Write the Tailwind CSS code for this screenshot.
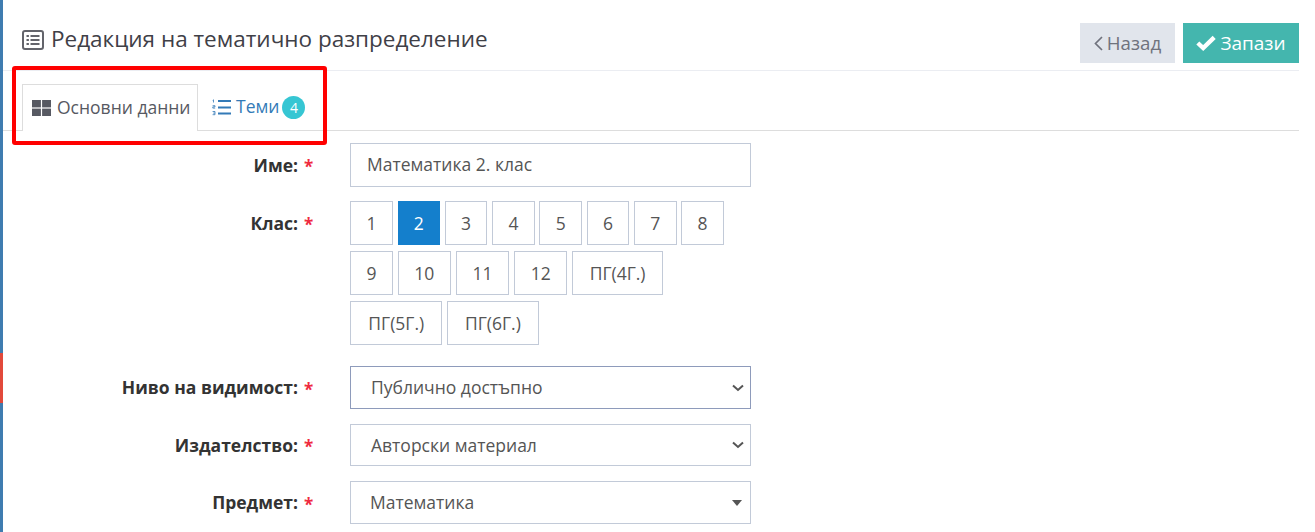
<!DOCTYPE html>
<html lang="bg">
<head>
<meta charset="utf-8">
<title>Редакция на тематично разпределение</title>
<script src="https://cdn.jsdelivr.net/npm/@tailwindcss/browser@4"></script>
</head>
<body class="bg-white overflow-hidden font-['Open_Sans',sans-serif] text-[#495057]">
<div class="relative flex h-[532px] w-[1315px] overflow-hidden">
    <!-- left strip -->
    <div class="flex flex-col w-[3px] h-full shrink-0 bg-[#3f7cb0]">
        <div class="h-[353px]"></div>
        <div class="h-[50px] bg-[#e2493b]"></div>
    </div>

    <div class="w-[1296px] shrink-0">
        <!-- header -->
        <div class="flex justify-between h-[71px] border-b border-[#ebedf2] pl-[19px]">
            <div class="flex items-center gap-[7px] h-[39px] mt-[19px] text-[22.5px] text-[#3f4047]">
                <svg class="w-[22px] h-[20px] mt-[2px]" viewBox="0 0 22 20" fill="none">
                    <rect x="1" y="1" width="20" height="18" rx="2" stroke="#63646b" stroke-width="2"/>
                    <g fill="#63646b">
                        <rect x="4.5" y="5" width="2.4" height="2"/>
                        <rect x="4.5" y="9" width="2.4" height="2"/>
                        <rect x="4.5" y="13" width="2.4" height="2"/>
                        <rect x="8.5" y="5" width="9" height="2"/>
                        <rect x="8.5" y="9" width="9" height="2"/>
                        <rect x="8.5" y="13" width="9" height="2"/>
                    </g>
                </svg>
                <h1 class="font-normal">Редакция на тематично разпределение</h1>
            </div>
            <div class="flex gap-2 mt-[23px] h-10">
                <button class="flex items-center justify-center gap-[4px] w-[95px] bg-[#e1e5ec] text-[18.7px] text-[#6f727d]">
                    <svg class="w-[9px] h-[15px]" viewBox="0 0 9 15" fill="none"><path d="M8 1 1.5 7.5 8 14" stroke="#6f727d" stroke-width="1.7"/></svg>
                    Назад
                </button>
                <button class="flex items-center justify-center gap-[4px] w-[116px] bg-[#44b6ae] text-[19px] text-white">
                    <svg class="w-[20px] h-[16px]" viewBox="0 0 20 16" fill="none"><path d="M1.8 8 7.2 13 18.2 2.4" stroke="#fff" stroke-width="4.4"/></svg>
                    Запази
                </button>
            </div>
        </div>

        <!-- tabs -->
        <div class="flex h-[60px] pt-[13px] pl-[19px] border-b border-[#ddd]">
            <div class="flex items-center gap-[6px] w-[176px] h-[47px] pl-[9px] bg-white border border-b-0 border-[#ddd] text-[17.5px] text-[#575962]">
                <svg class="w-[19px] h-[16px]" viewBox="0 0 19 16" fill="#575962">
                    <rect width="8.9" height="7.4"/><rect x="10.1" width="8.9" height="7.4"/>
                    <rect y="8.6" width="8.9" height="7.4"/><rect x="10.1" y="8.6" width="8.9" height="7.4"/>
                </svg>
                <span class="-mt-[2px]">Основни данни</span>
            </div>
            <div class="flex items-center pl-[14px] text-[17.5px] text-[#337ab7]">
                <svg class="w-[19px] h-[17px] mr-[5px]" viewBox="0 0 19 17" fill="none" stroke="#337ab7">
                    <path d="M6 2h13M6 8.5h13M6 14.5h13" stroke-width="2"/>
                    <path d="M1.5 3.5V.8L.7 1.4M.6 6.7h2.4v1.2H.8v1.2h2.4M.6 12.5h2.4v1.6H1.2M3 14.1v1.6H.6" stroke-width=".8"/>
                </svg>
                <span class="-mt-[2px]">Теми</span>
                <span class="flex items-center justify-center w-[23px] h-[23px] ml-[3px] rounded-full bg-[#36c6d3] text-[14px] text-white">4</span>
            </div>
        </div>

        <!-- form -->
        <div class="pt-[12px] text-[17.5px]">
            <div class="flex mb-[14px]">
                <label class="flex items-center justify-end w-[295px] h-[44px] font-bold text-[#333]">Име:</label>
                <span class="flex items-center w-[52px] h-[44px] pl-[6px] pt-[4px] text-[17px] text-[#ef2b3f] font-bold">*</span>
                <input class="w-[401px] h-[44px] px-4 pb-[2px] border border-[#c2cad8] text-[#555]" value="Математика 2. клас">
            </div>

            <div class="flex mb-[21px]">
                <label class="flex items-center justify-end w-[295px] h-[44px] font-bold text-[#333]">Клас:</label>
                <span class="flex items-center w-[52px] h-[44px] pl-[6px] pt-[4px] text-[17px] text-[#ef2b3f] font-bold">*</span>
                <div class="w-[401px] pl-[0.25px] flex flex-wrap gap-x-[4.7px] gap-y-[6px] text-[#555]">
                    <div class="flex items-center justify-center w-[42.6px] h-[44px] border border-[#c2cad8]">1</div>
                    <div class="flex items-center justify-center w-[42.6px] h-[44px] bg-[#147fcc] text-white">2</div>
                    <div class="flex items-center justify-center w-[42.6px] h-[44px] border border-[#c2cad8]">3</div>
                    <div class="flex items-center justify-center w-[42.6px] h-[44px] border border-[#c2cad8]">4</div>
                    <div class="flex items-center justify-center w-[42.6px] h-[44px] border border-[#c2cad8]">5</div>
                    <div class="flex items-center justify-center w-[42.6px] h-[44px] border border-[#c2cad8]">6</div>
                    <div class="flex items-center justify-center w-[42.6px] h-[44px] border border-[#c2cad8]">7</div>
                    <div class="flex items-center justify-center w-[42.6px] h-[44px] border border-[#c2cad8]">8</div>
                    <div class="flex items-center justify-center w-[42.6px] h-[44px] border border-[#c2cad8]">9</div>
                    <div class="flex items-center justify-center w-[53.5px] h-[44px] border border-[#c2cad8]">10</div>
                    <div class="flex items-center justify-center w-[53.5px] h-[44px] border border-[#c2cad8]">11</div>
                    <div class="flex items-center justify-center w-[53.5px] h-[44px] border border-[#c2cad8]">12</div>
                    <div class="flex items-center justify-center w-[91px] h-[44px] border border-[#c2cad8]">ПГ(4Г.)</div>
                    <div class="w-full flex gap-[4.7px]">
                        <div class="flex items-center justify-center w-[92px] h-[44px] border border-[#c2cad8]">ПГ(5Г.)</div>
                        <div class="flex items-center justify-center w-[92px] h-[44px] border border-[#c2cad8]">ПГ(6Г.)</div>
                    </div>
                </div>
            </div>

            <div class="flex mb-[15px]">
                <label class="flex items-center justify-end w-[295px] h-[43px] font-bold text-[#333]">Ниво на видимост:</label>
                <span class="flex items-center w-[52px] h-[43px] pl-[6px] pt-[4px] text-[17px] text-[#ef2b3f] font-bold">*</span>
                <div class="flex items-center justify-between w-[401px] h-[43px] pl-[20px] pr-[6px] border border-[#8e9bbb] text-[#555]">
                    Публично достъпно
                    <svg class="w-[12px] h-[8px]" viewBox="0 0 12 8" fill="none"><path d="M1 1.5 6 6 11 1.5" stroke="#555" stroke-width="2"/></svg>
                </div>
            </div>

            <div class="flex mb-[15px]">
                <label class="flex items-center justify-end w-[295px] h-[42px] font-bold text-[#333]">Издателство:</label>
                <span class="flex items-center w-[52px] h-[42px] pl-[6px] pt-[4px] text-[17px] text-[#ef2b3f] font-bold">*</span>
                <div class="flex items-center justify-between w-[401px] h-[42px] pl-[20px] pr-[6px] border border-[#c2cad8] text-[#555]">
                    Авторски материал
                    <svg class="w-[12px] h-[8px]" viewBox="0 0 12 8" fill="none"><path d="M1 1.5 6 6 11 1.5" stroke="#555" stroke-width="2"/></svg>
                </div>
            </div>

            <div class="flex">
                <label class="flex items-center justify-end w-[295px] h-[43px] font-bold text-[#333]">Предмет:</label>
                <span class="flex items-center w-[52px] h-[43px] pl-[6px] pt-[4px] text-[17px] text-[#ef2b3f] font-bold">*</span>
                <div class="flex items-center justify-between w-[401px] h-[43px] pl-[19px] pr-[8px] border border-[#c2cad8] text-[#555]">
                    Математика
                    <span class="w-0 h-0 border-x-[5px] border-x-transparent border-t-[6px] border-t-[#555]"></span>
                </div>
            </div>
        </div>
    </div>

    <!-- red highlight drawn over the tabs -->
    <div class="absolute left-[12px] top-[66px] w-[315px] h-[79px] border-[4px] border-[#ff0000] rounded-[3px]"></div>
</div>
</body>
</html>
